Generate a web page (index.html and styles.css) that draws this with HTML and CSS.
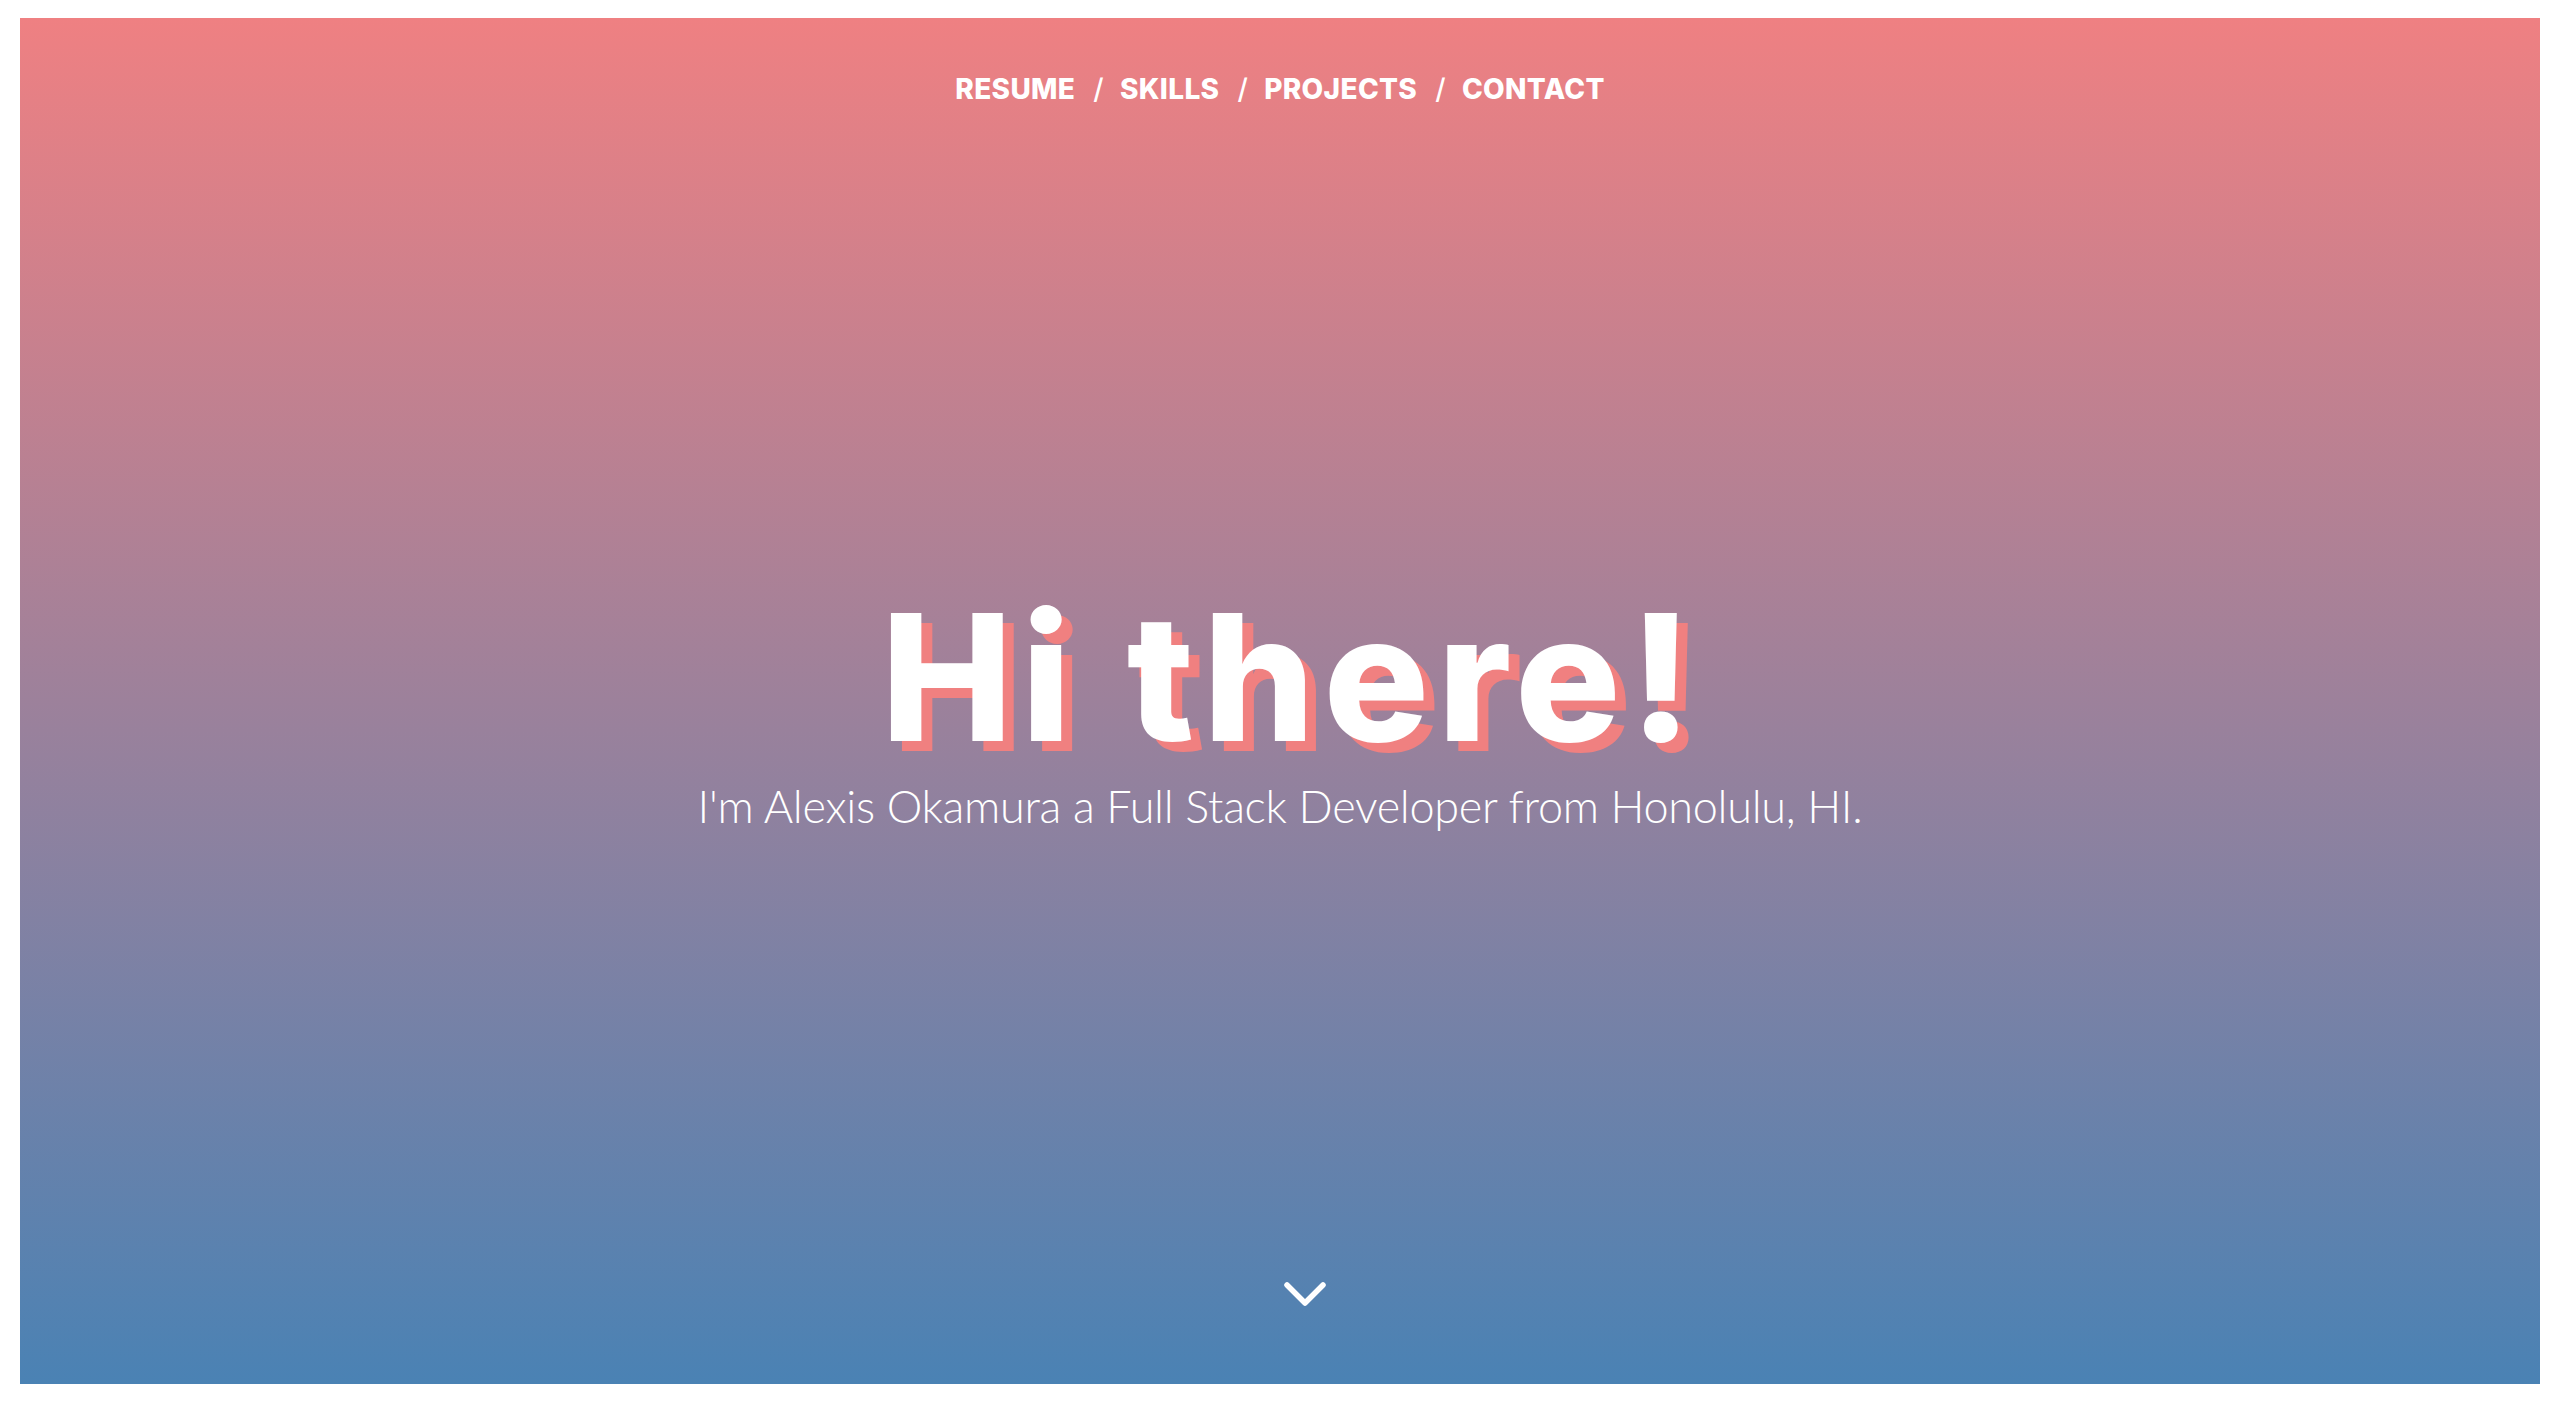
FILE: index.html
```html
<!DOCTYPE html>
<html lang="en">
<head>
<meta charset="utf-8">
<title>Alexis Okamura</title>
<link rel="stylesheet" href="styles.css">
</head>
<body>
<section class="hero">
  <nav class="nav">
    <a class="nav-link" href="#resume">RESUME</a>
    <span class="nav-sep">/</span>
    <a class="nav-link" href="#skills">SKILLS</a>
    <span class="nav-sep">/</span>
    <a class="nav-link" href="#projects">PROJECTS</a>
    <span class="nav-sep">/</span>
    <a class="nav-link" href="#contact">CONTACT</a>
  </nav>
  <div class="intro">
    <h1 class="title">Hi there!</h1>
    <p class="subtitle">I'm Alexis Okamura a Full Stack Developer from Honolulu, HI.</p>
  </div>
  <a class="scroll-down" href="#resume" aria-label="Scroll down">
    <svg class="chevron" width="48" height="30" viewBox="0 0 48 30">
      <path d="M4 5 L22 23 L40 5" fill="none" stroke="#fff" stroke-width="5.5" stroke-linecap="round" stroke-linejoin="round"/>
    </svg>
  </a>
</section>
</body>
</html>
```

FILE: styles.css
```css
* { box-sizing: border-box; }

html, body {
  margin: 0;
  height: 100%;
  background: #ffffff;
}

body {
  padding: 18px 20px 20px 20px;
}

.hero {
  height: 1366px;
  background: linear-gradient(to bottom, #ef8082 0%, #4a82b4 100%);
  display: flex;
  flex-direction: column;
  align-items: center;
  color: #ffffff;
}

.nav {
  padding-top: 57px;
  display: flex;
  align-items: baseline;
  justify-content: center;
  font-family: "Inter", "Liberation Sans", sans-serif;
  font-weight: 800;
  font-size: 28px;
  line-height: 28px;
  letter-spacing: 0.35px;
}

.nav-link {
  color: #ffffff;
  text-decoration: none;
}

.nav-sep {
  font-weight: 500;
  margin: 0 16px 0 18px;
}

.intro {
  margin-top: 486px;
  display: flex;
  flex-direction: column;
  align-items: center;
}

.title {
  margin: 0;
  font-family: "Inter", "Liberation Sans", sans-serif;
  font-weight: 800;
  font-size: 176px;
  line-height: 175px;
  letter-spacing: 8.5px;
  color: #ffffff;
  text-shadow: 11px 10px 0 #f08080;
  padding-left: 22px;
}

.subtitle {
  margin: 16px 0 0 0;
  font-family: "Lato", "Liberation Sans", sans-serif;
  font-weight: 300;
  font-size: 45px;
  line-height: 52px;
  letter-spacing: -0.3px;
}

.scroll-down {
  margin-top: auto;
  margin-bottom: 74px;
  margin-left: 54px;
  display: block;
  line-height: 0;
}
```
